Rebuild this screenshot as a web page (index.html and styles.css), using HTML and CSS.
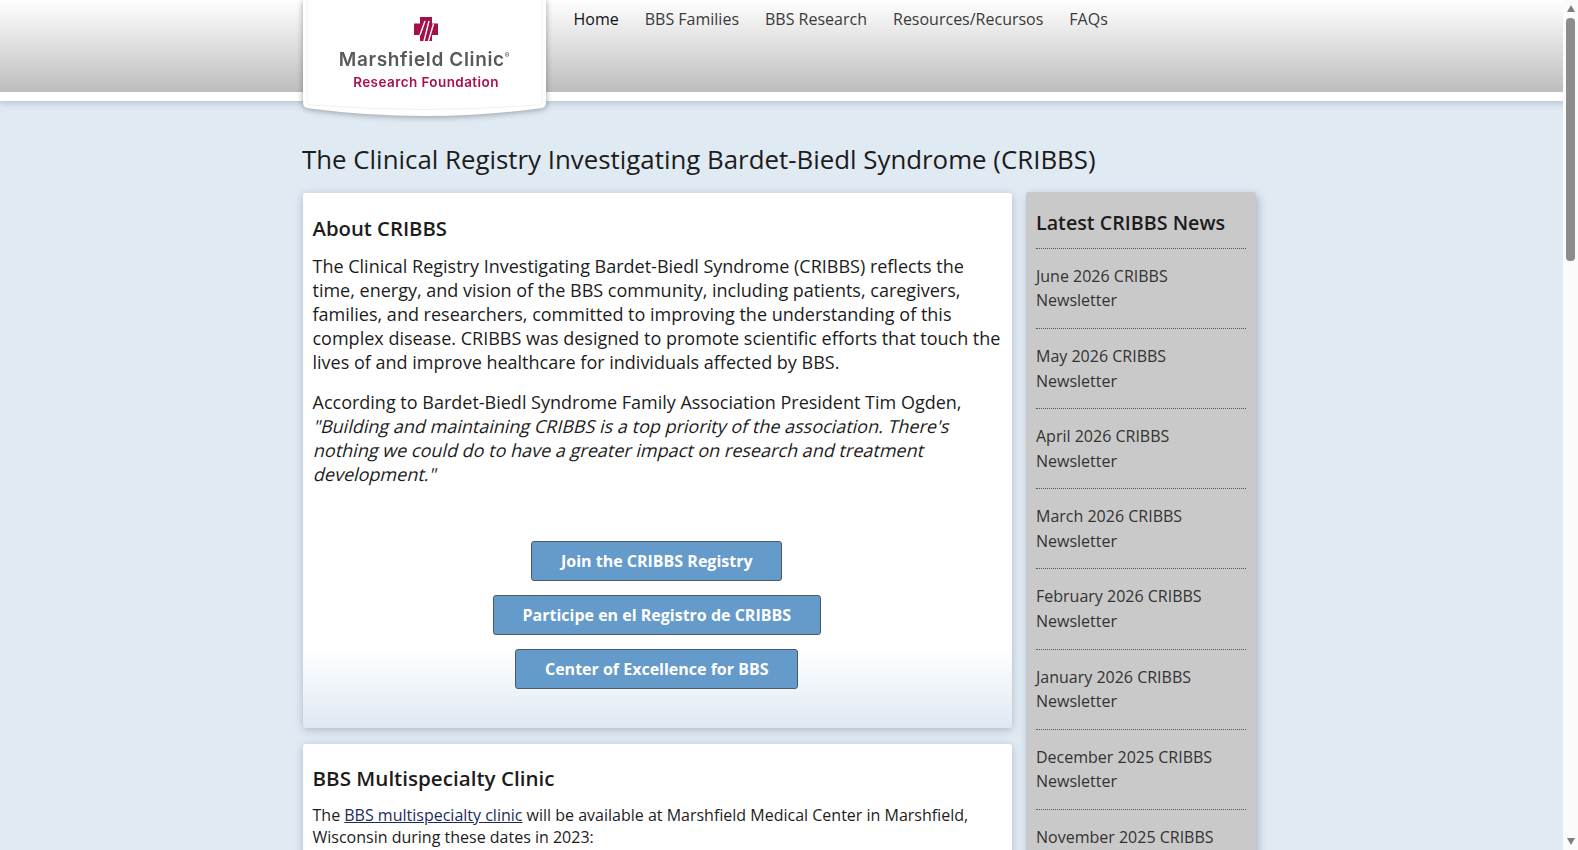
FILE: index.html
```html
<!DOCTYPE html>
<html lang="en">
<head>
    <meta charset="UTF-8">
    <meta name="viewport" content="width=device-width, initial-scale=1.0">
    <title>CRIBBS</title>
    <link rel="stylesheet" href="styles.css">
</head>
<body>
    <header class="header">
        <div class="header-inner">
            <a class="logo" href="#">
                <svg class="logo-shape" width="246" height="118" viewBox="0 0 246 118">
                    <path d="M1 0V103Q1 108 8 108.500Q122.500 123.500 237 108.500Q244 108 244 103V0Z" fill="#fff"/>
                    <path d="M5 0V101Q5 105 10 105Q122.500 114 235 105Q240 105 240 101V0" fill="none" stroke="#f1f1f1" stroke-width="1"/>
                </svg>
                <svg class="logo-cross" width="24" height="24" viewBox="0 0 24 24">
                    <path d="M6 0H18V6.500H24V18H18V24H6V18H0V6.500H6Z" fill="#a3104a"/>
                    <path d="M11 4L6 18M15 4L10 24M19.500 7L14.500 24" stroke="#fff" stroke-width="1.400" fill="none"/>
                </svg>
                <span class="logo-name">Marshfield Clinic<sup class="logo-reg">&reg;</sup></span>
                <span class="logo-sub">Research Foundation</span>
            </a>
            <nav class="nav">
                <a class="nav-item active" href="#">Home</a>
                <a class="nav-item" href="#">BBS Families</a>
                <a class="nav-item" href="#">BBS Research</a>
                <a class="nav-item" href="#">Resources/Recursos</a>
                <a class="nav-item" href="#">FAQs</a>
            </nav>
        </div>
    </header>

    <div class="page">
        <h1 class="page-title">The Clinical Registry Investigating Bardet-Biedl Syndrome (CRIBBS)</h1>
        <div class="columns">
            <main class="main">
                <section class="card card-fade">
                    <h2>About CRIBBS</h2>
                    <p>The Clinical Registry Investigating Bardet-Biedl Syndrome (CRIBBS) reflects the time, energy, and vision of the BBS community, including patients, caregivers, families, and researchers, committed to improving the understanding of this complex disease. CRIBBS was designed to promote scientific efforts that touch the lives of and improve healthcare for individuals affected by BBS.</p>
                    <p>According to Bardet-Biedl Syndrome Family Association President Tim Ogden,
                        <span class="quote-line">"Building and maintaining CRIBBS is a top priority of the association. There's</span>
                        <span class="quote-line">nothing we could do to have a greater impact on research and treatment</span>
                        <span class="quote-line">development."</span>
                    </p>
                    <div class="buttons">
                        <a class="btn" href="#">Join the CRIBBS Registry</a>
                        <a class="btn" href="#">Participe en el Registro de CRIBBS</a>
                        <a class="btn" href="#">Center of Excellence for BBS</a>
                    </div>
                </section>
                <section class="card card-small">
                    <h2>BBS Multispecialty Clinic</h2>
                    <p>The <a href="#">BBS multispecialty clinic</a> will be available at Marshfield Medical Center in Marshfield, Wisconsin during these dates in 2023:</p>
                </section>
            </main>
            <aside class="side">
                <h3>Latest CRIBBS News</h3>
                <ul class="news">
                    <li><a href="#">June 2026 CRIBBS Newsletter</a></li>
                    <li><a href="#">May 2026 CRIBBS Newsletter</a></li>
                    <li><a href="#">April 2026 CRIBBS Newsletter</a></li>
                    <li><a href="#">March 2026 CRIBBS Newsletter</a></li>
                    <li><a href="#">February 2026 CRIBBS Newsletter</a></li>
                    <li><a href="#">January 2026 CRIBBS Newsletter</a></li>
                    <li><a href="#">December 2025 CRIBBS Newsletter</a></li>
                    <li><a href="#">November 2025 CRIBBS Newsletter</a></li>
                </ul>
            </aside>
        </div>
    </div>

    <div class="scrollbar">
        <div class="arrow-up"></div>
        <div class="thumb"></div>
        <div class="arrow-down"></div>
    </div>
</body>
</html>
```

FILE: styles.css
```css
body {
    font-family: "Open Sans", sans-serif;
    background-color: #e0eaf3;
    color: #1c1c1c;
    margin: 0;
    min-height: 2850px;
}
a {
    color: inherit;
    text-decoration: none;
}
.header {
    height: 92px;
    background: linear-gradient(to bottom, #ffffff 0%, #bdbdbd 100%);
    border-bottom: 9px solid #fff;
    box-shadow: 0 3px 6px rgba(120, 140, 160, 0.35);
}
.header-inner {
    width: 957px;
    margin-left: 302px;
    display: flex;
}
.logo {
    position: relative;
    width: 245px;
    height: 118px;
    flex-shrink: 0;
    display: flex;
    flex-direction: column;
    align-items: center;
    filter: drop-shadow(0 1px 3px rgba(0, 0, 0, 0.35));
}
.logo-shape {
    position: absolute;
    top: 0;
    left: 0;
}
.logo-cross {
    position: relative;
    margin-top: 17px;
    margin-left: 2px;
}
.logo-name {
    position: relative;
    font-family: "Inter", sans-serif;
    font-size: 19px;
    font-weight: 600;
    letter-spacing: 0.650px;
    color: #58595b;
    margin-top: 6px;
    line-height: 25px;
}
.logo-reg {
    font-size: 7px;
    vertical-align: 8px;
    line-height: 0;
}
.logo-sub {
    position: relative;
    font-family: "Inter", sans-serif;
    font-size: 13.500px;
    font-weight: 600;
    letter-spacing: 0.420px;
    color: #a80f55;
    line-height: 18px;
    margin-top: 1px;
    margin-left: 3px;
}
.nav {
    display: flex;
    gap: 26px;
    margin-left: 26.500px;
    padding-top: 8px;
}
.nav-item {
    font-size: 16px;
    line-height: 22px;
    color: #3a3a3a;
}
.nav-item.active {
    color: #111;
}
.page {
    width: 957px;
    margin-left: 302px;
}
.page-title {
    font-size: 25.850px;
    font-weight: 400;
    line-height: 36px;
    margin: 40px 0 16px;
}
.columns {
    display: flex;
    gap: 14px;
    align-items: flex-start;
}
.main {
    width: 709px;
    margin-left: 1px;
    display: flex;
    flex-direction: column;
    gap: 16px;
}
.card {
    background: #fff;
    border-radius: 3px;
    box-shadow: 0 2px 8px rgba(90, 115, 140, 0.4);
    padding: 10px 11px 10px 9.500px;
}
.card-fade {
    height: 515px;
    background: linear-gradient(to bottom, #fff 0%, #fff 85%, #dfe9f2 100%);
}
.card h2 {
    font-size: 20.300px;
    font-weight: 600;
    line-height: 27px;
    margin: 12px 0 12px;
}
.card p {
    font-size: 18px;
    line-height: 24.100px;
    margin: 0 0 16px;
}
.quote-line {
    display: block;
    transform: translateY(-1px) skewX(-14deg);
    transform-origin: 0 75%;
}
.card-small h2 {
    font-size: 20.600px;
    margin: 11px 0 12px;
}
.card-small p {
    font-size: 16px;
    line-height: 22px;
}
.card-small p a {
    color: #1c2b5a;
    text-decoration: underline;
}
.buttons {
    display: flex;
    flex-direction: column;
    align-items: center;
    gap: 14px;
    margin-top: 54px;
}
.btn {
    background-color: #659bca;
    border: 1px solid #4a5a6a;
    border-radius: 3px;
    color: #fff;
    font-size: 16px;
    font-weight: 700;
    line-height: 38px;
    padding: 0 28.700px;
}
.side {
    width: 230px;
    box-sizing: border-box;
    background: #c9c9c9;
    border-radius: 3px;
    box-shadow: 2px 3px 8px rgba(90, 115, 140, 0.45);
    padding: 10px;
    margin-top: -1px;
}
.side h3 {
    font-size: 19.700px;
    font-weight: 600;
    line-height: 27px;
    margin: 7px 0 12px;
}
.news {
    list-style: none;
    margin: 0;
    padding: 0;
}
.news li {
    border-top: 1px dotted #555;
    padding: 15px 0 15.300px;
    font-size: 16px;
    line-height: 24.400px;
    color: #333;
}
/* drawn scrollbar, the headless window does not show one */
.scrollbar {
    position: fixed;
    top: 0;
    right: 0;
    bottom: 0;
    width: 15px;
    background: #fbfbfb;
    display: flex;
    flex-direction: column;
    align-items: center;
}
.arrow-up {
    margin-top: 5px;
    border-left: 4.500px solid transparent;
    border-right: 4.500px solid transparent;
    border-bottom: 7px solid #7d7d7d;
}
.thumb {
    width: 9px;
    height: 243px;
    margin-top: 6px;
    background: #8c8c8c;
    border-radius: 4px;
}
.arrow-down {
    margin-top: auto;
    margin-bottom: 5px;
    border-left: 4.500px solid transparent;
    border-right: 4.500px solid transparent;
    border-top: 7px solid #7d7d7d;
}
```
